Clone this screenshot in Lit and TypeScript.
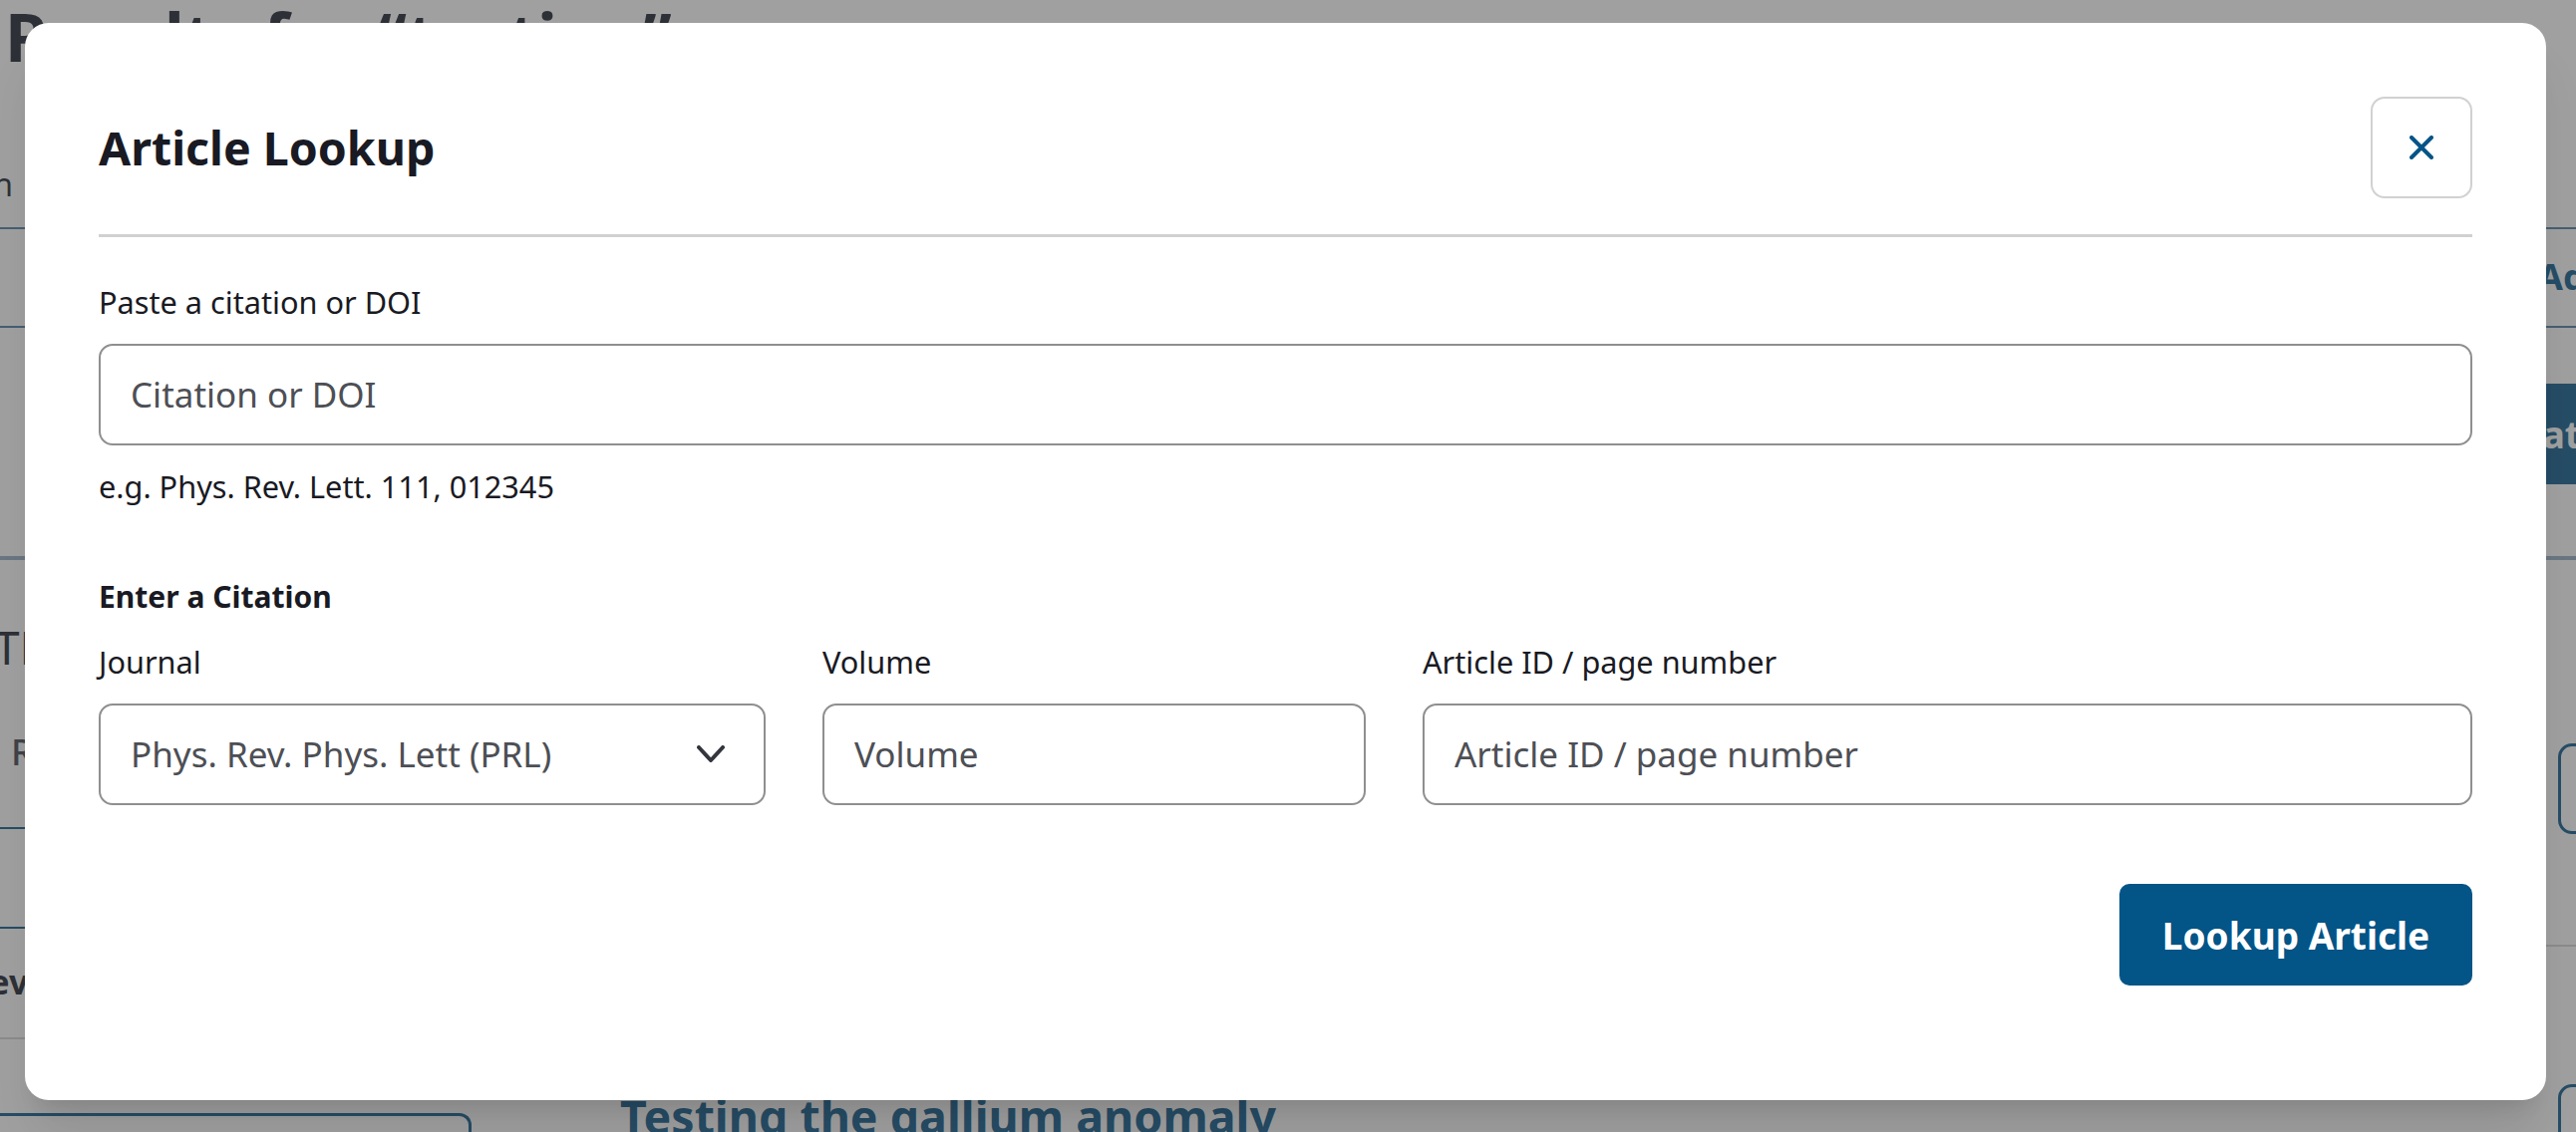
import { LitElement, html, css } from "lit";
import { customElement } from "lit/decorators.js";

@customElement("app-root")
export class AppRoot extends LitElement {
  static styles = css`
    :host {
      display: block;
      position: relative;
      width: 2584px;
      height: 1136px;
      overflow: hidden;
      font-family: "Noto Sans", "Open Sans", sans-serif;
      color: #191a23;
      background: #fff;
    }
    * { box-sizing: border-box; }

    /* Page behind the dialog */
    .page { width: 2584px; height: 1136px; overflow: hidden; color: #111827; }
    .hero { height: 230px; border-bottom: 2px solid #4579a2; }
    h1 { margin: 0; padding-left: 5px; font-size: 66.5px; line-height: 72px; font-weight: 700; white-space: nowrap; }
    .sub { width: 13px; margin-top: 91px; display: flex; justify-content: flex-end; font-size: 32px; line-height: 44px; white-space: nowrap; }
    .tabs { height: 99px; padding-bottom: 2px; border-bottom: 2px solid #4579a2; display: flex; align-items: center; padding-left: 2546px; color: #035487; font-size: 36px; font-weight: 700; white-space: nowrap; }
    .cta { height: 233px; padding-top: 56px; border-bottom: 4px solid #8fa8c1; }
    .cta-btn { margin-left: 2300px; width: 500px; height: 101px; background: #035487; color: #fff; display: flex; align-items: center; padding-left: 189px; font-size: 37px; font-weight: 700; }
    .lower { display: flex; }
    .side { width: 473px; flex: none; }
    .s-t { margin: 57px 0 0 -6px; font-size: 46px; line-height: 60px; font-weight: 400; white-space: nowrap; }
    .s-r { margin: 52px 0 0 11px; font-size: 36px; line-height: 48px; font-weight: 500; color: #3a3f4a; white-space: nowrap; }
    .rule { height: 2px; background: #035487; }
    .r1 { margin-top: 51px; }
    .r2 { margin-top: 98px; }
    .s-e { margin: 31px 0 0 -33px; font-size: 34px; line-height: 44px; font-weight: 700; white-space: nowrap; }
    .hair { height: 2px; background: #d3d3d3; }
    .h1 { margin-top: 34px; }
    .s-box { margin-top: 74px; height: 100px; border-top: 3px solid #035487; border-right: 3px solid #035487; border-top-right-radius: 12px; }
    .main { width: 2067px; flex: none; padding: 528px 0 0 149px; }
    .title { margin: 0; font-size: 46.5px; line-height: 60px; font-weight: 700; color: #035487; white-space: nowrap; }
    .actions { flex: 1; }
    .act { margin-left: 26px; width: 200px; height: 91px; border: 3px solid #035487; border-radius: 14px; }
    .a1 { margin-top: 184px; }
    .h2 { margin-top: 111px; }
    .a2 { margin-top: 138px; }

    /* Dialog */
    .overlay { position: absolute; inset: 0; background: rgba(71, 71, 71, 0.516); padding: 23px 30px 32px 25px; }
    .modal {
      height: 1081px;
      background: #fff;
      border-radius: 24px;
      padding: 74px 74px 0;
      box-shadow: 0 40px 50px -10px rgba(0, 0, 0, 0.1), 0 16px 20px -12px rgba(0, 0, 0, 0.1);
    }
    .head { display: flex; align-items: center; justify-content: space-between; padding-bottom: 36px; border-bottom: 3px solid #d1d1d1; }
    h2 { margin: 0; font-size: 46.5px; line-height: 60px; font-weight: 700; }
    .close { width: 102px; height: 102px; padding: 0; background: #fff; border: 2px solid #d1d1d1; border-radius: 14px; display: flex; align-items: center; justify-content: center; }
    .close svg { width: 24px; height: 24px; display: block; }
    .body { padding-top: 43px; }
    label, .hint, .legend { display: block; font-size: 30.7px; line-height: 44px; }
    .field { display: flex; flex-direction: column; gap: 20px; }
    input, select {
      width: 100%;
      height: 102px;
      padding: 0 30px 2px;
      border: 2px solid #8f8f8f;
      border-radius: 14px;
      background: #fff;
      font: 400 35px "Noto Sans", sans-serif;
      color: #4d4f55;
      outline: none;
      appearance: none;
    }
    input::placeholder { color: #4d4f55; opacity: 1; }
    .hint { margin-top: 19px; }
    .legend { margin-top: 67px; font-weight: 700; font-size: 30px; }
    .grid { margin-top: 21px; display: grid; grid-template-columns: 669px 545px 1fr; gap: 57px; }
    .select { position: relative; }
    .select svg { position: absolute; right: 41px; top: 42px; width: 28px; height: 17px; pointer-events: none; }
    .foot { margin-top: 79px; display: flex; justify-content: flex-end; }
    .submit { width: 354px; height: 102px; padding: 0; border: none; border-radius: 10px; background: #035487; color: #fff; font: 700 37px "Noto Sans", sans-serif; }
  `;

  render() {
    return html`
      <div class="page">
        <div class="hero">
          <h1>Results for “testing”</h1>
          <div class="sub">Search</div>
        </div>
        <div class="tabs">Add</div>
        <div class="cta"><div class="cta-btn">Create</div></div>
        <div class="lower">
          <div class="side">
            <div class="s-t">TH</div>
            <div class="s-r">Re</div>
            <div class="rule r1"></div>
            <div class="rule r2"></div>
            <div class="s-e">Rev.</div>
            <div class="hair h1"></div>
            <div class="s-box"></div>
          </div>
          <div class="main"><p class="title">Testing the gallium anomaly</p></div>
          <div class="actions">
            <div class="act a1"></div>
            <div class="hair h2"></div>
            <div class="act a2"></div>
          </div>
        </div>
      </div>
      <div class="overlay">
        <div class="modal" role="dialog" aria-label="Article Lookup">
          <div class="head">
            <h2>Article Lookup</h2>
            <button class="close" aria-label="Close">
              <svg viewBox="0 0 24 24" fill="none" stroke="#035487" stroke-width="4" stroke-linecap="round"><path d="M2 2 22 22M22 2 2 22" /></svg>
            </button>
          </div>
          <div class="body">
            <div class="field">
              <label>Paste a citation or DOI</label>
              <input placeholder="Citation or DOI" />
            </div>
            <div class="hint">e.g. Phys. Rev. Lett. 111, 012345</div>
            <div class="legend">Enter a Citation</div>
            <div class="grid">
              <div class="field">
                <label>Journal</label>
                <div class="select">
                  <select><option>Phys. Rev. Phys. Lett (PRL)</option></select>
                  <svg viewBox="0 0 28 17" fill="none" stroke="#33363d" stroke-width="4" stroke-linecap="round" stroke-linejoin="round"><path d="M2 2 14 15 26 2" /></svg>
                </div>
              </div>
              <div class="field">
                <label>Volume</label>
                <input placeholder="Volume" />
              </div>
              <div class="field">
                <label>Article ID / page number</label>
                <input placeholder="Article ID / page number" />
              </div>
            </div>
            <div class="foot"><button class="submit">Lookup Article</button></div>
          </div>
        </div>
      </div>
    `;
  }
}
